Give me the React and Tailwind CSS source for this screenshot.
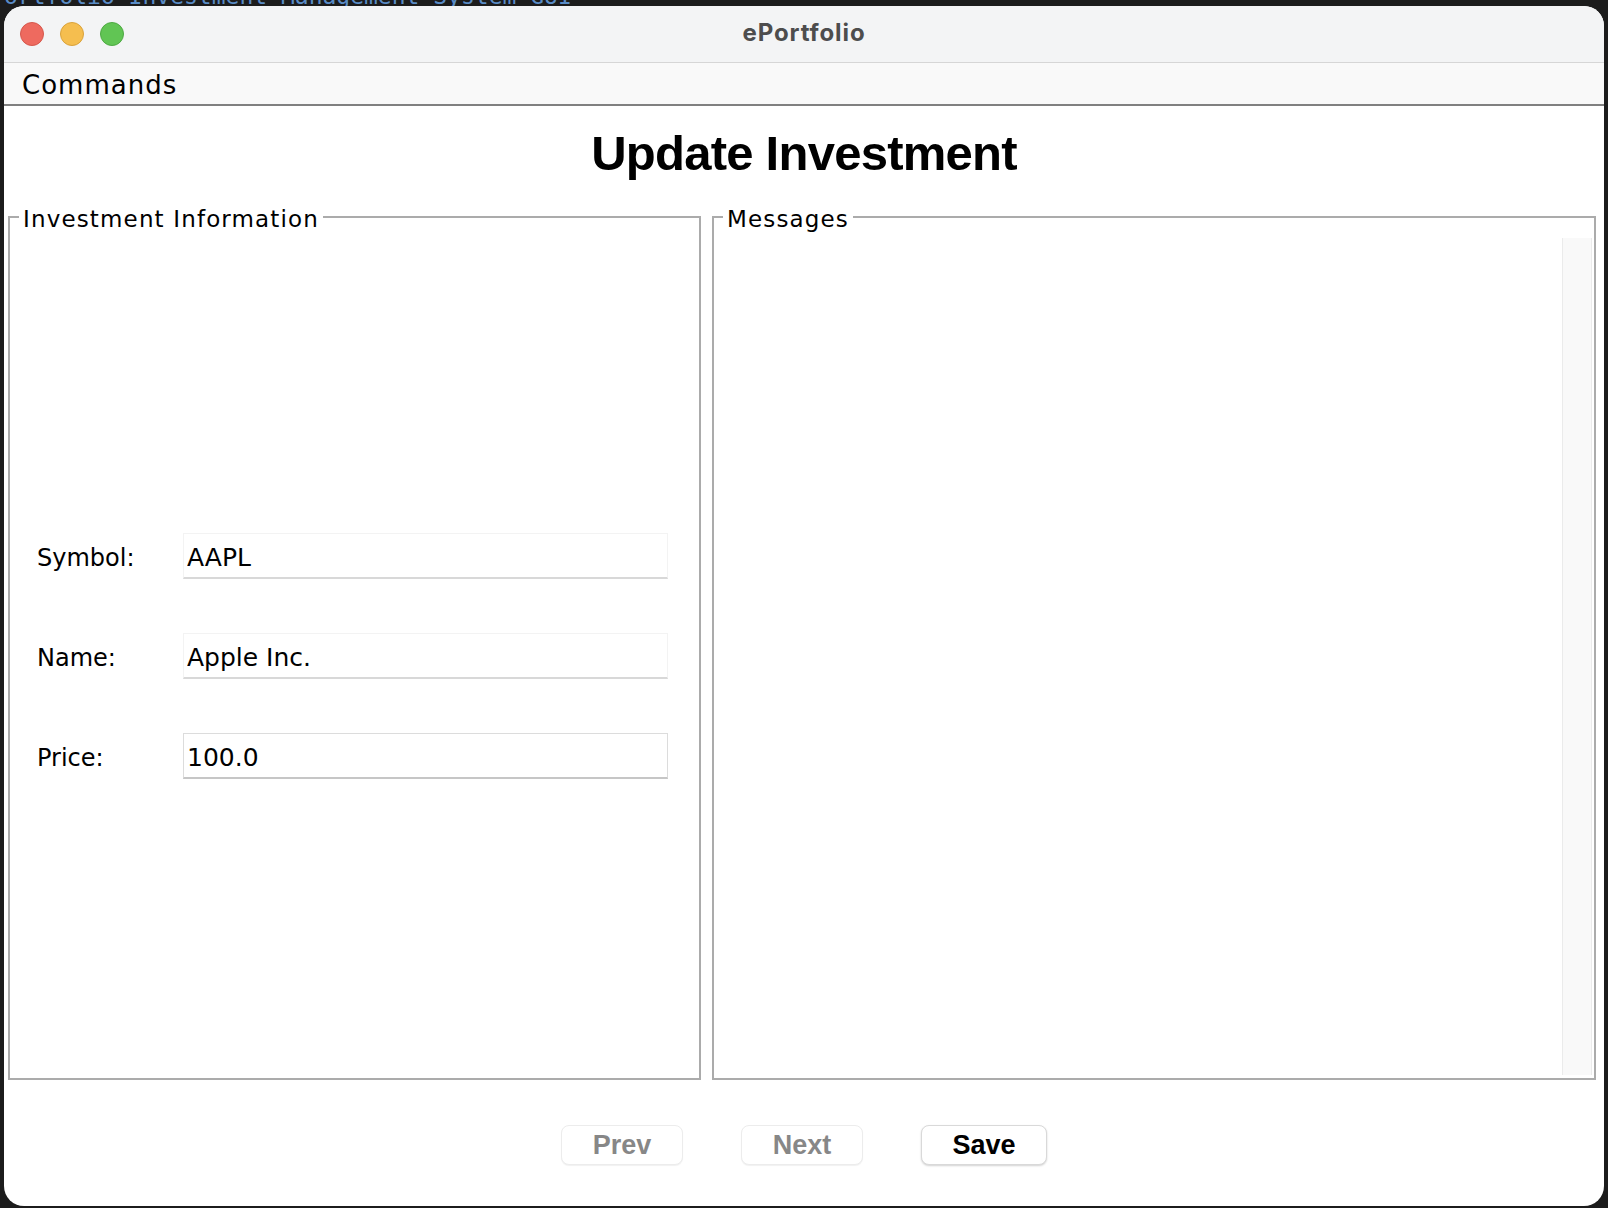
import React from 'react'

const fields = [
  { label: 'Symbol:', value: 'AAPL', editable: false },
  { label: 'Name:', value: 'Apple Inc.', editable: false },
  { label: 'Price:', value: '100.0', editable: true },
]

function TrafficLights() {
  return (
    <div className="flex items-center gap-[16px] pl-[16px]">
      <span className="w-[24px] h-[24px] rounded-full bg-[#ee6a5f] border border-[#d5574c]" />
      <span className="w-[24px] h-[24px] rounded-full bg-[#f5be4f] border border-[#d9a23b]" />
      <span className="w-[24px] h-[24px] rounded-full bg-[#61c554] border border-[#4ea943]" />
    </div>
  )
}

function GroupBox({ title, className, children }) {
  return (
    <fieldset className={`border-2 border-[#ababab] flex flex-col ${className}`}>
      <legend className="ml-[9px] px-[4px] pt-[5px] text-[23px] leading-[27px] tracking-[1.15px] text-black font-['DejaVu_Sans',sans-serif]">
        {title}
      </legend>
      {children}
    </fieldset>
  )
}

export default function App() {
  return (
    <div className="relative w-[1608px] h-[1208px] bg-[#1c1c1c] overflow-hidden pl-[4px] pt-[6px]">
      {/* editor text from the window behind */}
      <div className="absolute top-[-15px] left-[4px] text-[23px] leading-[22px] text-[#5a8cc6] whitespace-pre font-['DejaVu_Sans_Mono',monospace]">
        ortfolio Investment Management System GUI
      </div>

      <div className="relative z-10 w-[1600px] h-[1200px] rounded-[20px] overflow-hidden bg-white flex flex-col">
        {/* title bar */}
        <div className="relative h-[57px] bg-[#f3f4f5] border-b border-[#d6d6d6] flex items-center shrink-0">
          <TrafficLights />
          <div className="absolute inset-0 flex items-center justify-center text-[24px] font-bold tracking-[0.9px] text-[#4d4d4d] font-['Inter',sans-serif] pb-[2px]">
            ePortfolio
          </div>
        </div>

        {/* menu bar */}
        <div className="h-[43px] bg-[#f9f9f9] border-b-2 border-[#808080] flex items-center pl-[18px] shrink-0">
          <span className="text-[26px] tracking-[1px] text-black font-['DejaVu_Sans',sans-serif] pt-[4px]">Commands</span>
        </div>

        {/* heading */}
        <h1 className="mt-[19px] h-[56px] leading-[56px] text-center text-[49px] font-bold tracking-[-0.75px] text-black font-['Liberation_Sans',Arial,sans-serif]">
          Update Investment
        </h1>

        {/* panels */}
        <div className="mt-[20px] flex gap-[11px] pl-[4px]">
          <GroupBox title="Investment Information" className="w-[693px] h-[879px]">
            <div className="mt-[300px] flex flex-col gap-[54px]">
              {fields.map((f) => (
                <div key={f.label} className="flex items-center pl-[27px]">
                  <span className="w-[146px] pt-[4px] text-[24px] text-black font-['DejaVu_Sans',sans-serif]">{f.label}</span>
                  <input
                    readOnly
                    defaultValue={f.value}
                    className={`w-[485px] h-[46px] px-[3px] pt-[3px] text-[25px] text-black bg-white outline-none font-['DejaVu_Sans',sans-serif] ${
                      f.editable
                        ? 'border border-[#dcdcdc] border-b-2 border-b-[#c6c6c6]'
                        : 'border border-[#f3f3f3] border-b-2 border-b-[#d8d8d8]'
                    }`}
                  />
                </div>
              ))}
            </div>
          </GroupBox>

          <GroupBox title="Messages" className="w-[884px] h-[879px]">
            <div className="flex-1 flex justify-end pt-[5px] pb-[3px] pr-[2px]">
              <div className="w-[30px] h-full bg-[#f9f9f9] border-x border-[#ebebeb]" />
            </div>
          </GroupBox>
        </div>

        {/* buttons */}
        <div className="mt-[45px] flex justify-center gap-[58px]">
          <button disabled className="w-[122px] h-[40px] rounded-[8px] bg-white border border-[#ececec] shadow-[0_1px_1px_rgba(0,0,0,0.06)] text-[27px] leading-[38px] font-bold text-[#878787] font-['Liberation_Sans',Arial,sans-serif]">
            Prev
          </button>
          <button disabled className="w-[122px] h-[40px] rounded-[8px] bg-white border border-[#ececec] shadow-[0_1px_1px_rgba(0,0,0,0.06)] text-[27px] leading-[38px] font-bold text-[#878787] font-['Liberation_Sans',Arial,sans-serif]">
            Next
          </button>
          <button className="w-[126px] h-[40px] rounded-[8px] bg-white border border-[#d9d9d9] shadow-[0_1px_2px_rgba(0,0,0,0.18)] text-[27px] leading-[38px] font-bold text-black font-['Liberation_Sans',Arial,sans-serif]">
            Save
          </button>
        </div>
      </div>
    </div>
  )
}
